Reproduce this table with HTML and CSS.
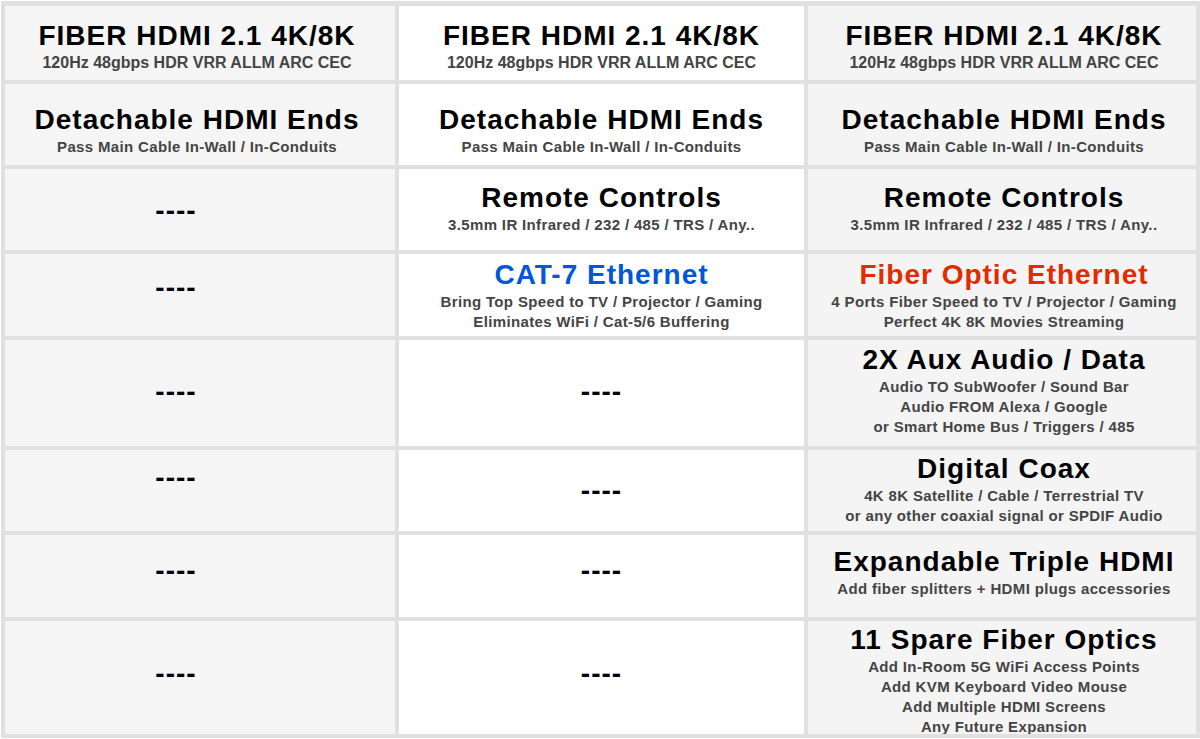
FILE: index.html
```html
<!DOCTYPE html>
<html lang="en">
<head>
<meta charset="utf-8">
<title>Fiber HDMI comparison</title>
<link rel="stylesheet" href="styles.css">
</head>
<body>
<div class="table">
  <!-- Row 1 -->
  <div class="cell c1 pt5"><div class="title">FIBER HDMI 2.1 4K/8K</div><div class="sub sub-lg">120Hz 48gbps HDR VRR ALLM ARC CEC</div></div>
  <div class="cell c2 pt5"><div class="title">FIBER HDMI 2.1 4K/8K</div><div class="sub sub-lg">120Hz 48gbps HDR VRR ALLM ARC CEC</div></div>
  <div class="cell c3 pt5"><div class="title">FIBER HDMI 2.1 4K/8K</div><div class="sub sub-lg">120Hz 48gbps HDR VRR ALLM ARC CEC</div></div>
  <!-- Row 2 -->
  <div class="cell c1 pt10"><div class="title">Detachable HDMI Ends</div><div class="sub">Pass Main Cable In-Wall / In-Conduits</div></div>
  <div class="cell c2 pt10"><div class="title">Detachable HDMI Ends</div><div class="sub">Pass Main Cable In-Wall / In-Conduits</div></div>
  <div class="cell c3 pt10"><div class="title">Detachable HDMI Ends</div><div class="sub">Pass Main Cable In-Wall / In-Conduits</div></div>
  <!-- Row 3 -->
  <div class="cell c1 dash-l pt3"><div class="title">----</div></div>
  <div class="cell c2 pb4"><div class="title">Remote Controls</div><div class="sub">3.5mm IR Infrared / 232 / 485 / TRS / Any..</div></div>
  <div class="cell c3 pb4"><div class="title">Remote Controls</div><div class="sub">3.5mm IR Infrared / 232 / 485 / TRS / Any..</div></div>
  <!-- Row 4 -->
  <div class="cell c1 dash-l pb14"><div class="title">----</div></div>
  <div class="cell c2"><div class="title blue">CAT-7 Ethernet</div><div class="sub">Bring Top Speed to TV / Projector / Gaming</div><div class="sub">Eliminates WiFi / Cat-5/6 Buffering</div></div>
  <div class="cell c3"><div class="title red">Fiber Optic Ethernet</div><div class="sub">4 Ports Fiber Speed to TV / Projector / Gaming</div><div class="sub">Perfect 4K 8K Movies Streaming</div></div>
  <!-- Row 5 -->
  <div class="cell c1 dash-l pb2"><div class="title">----</div></div>
  <div class="cell c2 pb2"><div class="title">----</div></div>
  <div class="cell c3 pb7"><div class="title">2X Aux Audio / Data</div><div class="sub">Audio TO SubWoofer / Sound Bar</div><div class="sub">Audio FROM Alexa / Google</div><div class="sub">or Smart Home Bus / Triggers / 485</div></div>
  <!-- Row 6 -->
  <div class="cell c1 dash-l pb25"><div class="title">----</div></div>
  <div class="cell c2"><div class="title">----</div></div>
  <div class="cell c3 pb4"><div class="title">Digital Coax</div><div class="sub">4K 8K Satellite / Cable / Terrestrial TV</div><div class="sub">or any other coaxial signal or SPDIF Audio</div></div>
  <!-- Row 7 -->
  <div class="cell c1 dash-l pb10"><div class="title">----</div></div>
  <div class="cell c2 pb10"><div class="title">----</div></div>
  <div class="cell c3 pb9"><div class="title">Expandable Triple HDMI</div><div class="sub">Add fiber splitters + HDMI plugs accessories</div></div>
  <!-- Row 8 -->
  <div class="cell c1 dash-l pb7"><div class="title">----</div></div>
  <div class="cell c2 pb7"><div class="title">----</div></div>
  <div class="cell c3 pt4"><div class="title">11 Spare Fiber Optics</div><div class="sub">Add In-Room 5G WiFi Access Points</div><div class="sub">Add KVM Keyboard Video Mouse</div><div class="sub">Add Multiple HDMI Screens</div><div class="sub">Any Future Expansion</div></div>
</div>
</body>
</html>
```

FILE: styles.css
```css
* {
  box-sizing: border-box;
  margin: 0;
  padding: 0;
}

html, body {
  background: #ffffff;
}

body {
  font-family: "Liberation Sans", Arial, sans-serif;
  width: 1200px;
  height: 739px;
  overflow: hidden;
}

.table {
  display: grid;
  grid-template-columns: 390px 405px 388px;
  grid-template-rows: 74px 81px 81px 82px 106px 81px 82px 113px;
  gap: 4px;
  background: #e0e0e0;
  padding: 5px 4px 4px 4px;
  margin: 1px 0 0 1px;
  width: 1199px;
}

.cell {
  display: flex;
  flex-direction: column;
  align-items: center;
  justify-content: center;
  text-align: center;
  overflow: hidden;
}

.c1 {
  background: #f5f5f5;
  padding-right: 6px;
}

.c2 {
  background: #ffffff;
}

.c3 {
  background: #f4f4f4;
  padding-left: 4px;
}

.dash-l {
  padding-right: 48px;
}

.title {
  font-size: 28px;
  line-height: 34px;
  font-weight: 700;
  letter-spacing: 1px;
  color: #000000;
  white-space: nowrap;
}

.sub {
  font-size: 15px;
  line-height: 20px;
  font-weight: 700;
  letter-spacing: 0.35px;
  color: #444444;
  white-space: nowrap;
}

.sub-lg {
  font-size: 16px;
  letter-spacing: 0;
}

.blue {
  color: #0057d8;
}

.red {
  color: #e22b00;
}

/* vertical nudges (content shifts by half the padding) */
.pt3 { padding-top: 3px; }
.pt4 { padding-top: 4px; }
.pt5 { padding-top: 5px; }
.pt10 { padding-top: 10px; }
.pb2 { padding-bottom: 2px; }
.pb4 { padding-bottom: 4px; }
.pb7 { padding-bottom: 7px; }
.pb9 { padding-bottom: 9px; }
.pb10 { padding-bottom: 10px; }
.pb14 { padding-bottom: 14px; }
.pb25 { padding-bottom: 25px; }
```
